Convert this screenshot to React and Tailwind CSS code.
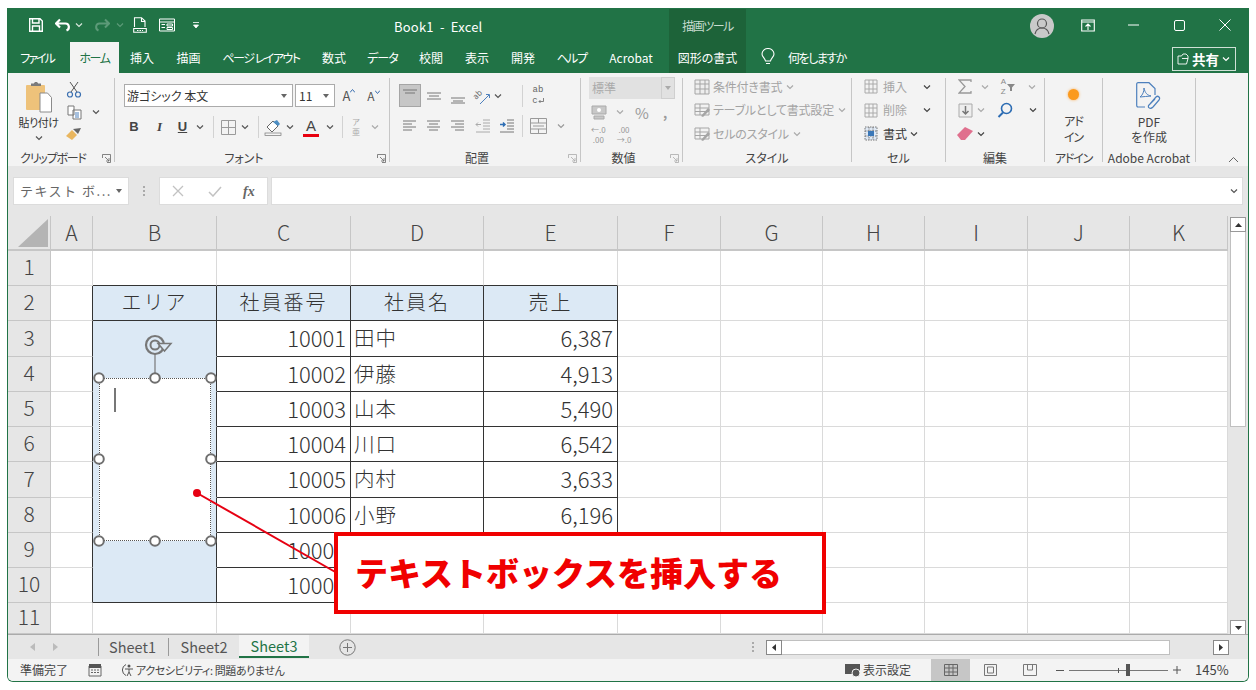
import React from "react";

const font = "[font-family:'Noto_Sans_CJK_JP','Noto_Sans',sans-serif]";

const Chev = ({ className = "", color = "#555" }) => (
  <svg width="8" height="6" viewBox="0 0 8 6" className={className}>
    <path d="M1 1.5 4 4.5 7 1.5" fill="none" stroke={color} strokeWidth="1.2" />
  </svg>
);

const Sep = () => <div className="h-[22px] w-px bg-[#d2d2d2]" />;

const Launcher = ({ color = "#666" }) => (
  <svg width="9" height="9" viewBox="0 0 9 9">
    <path d="M.5 4V.5H8.500V8.500H5M3 3 7 7M7 4V7H4" fill="none" stroke={color} strokeWidth=".8" />
  </svg>
);

const Lines = ({ kind = "left", color = "#777" }) => {
  const rows = {
    left: ["M1 3h13", "M1 6h9", "M1 9h13", "M1 12h9"],
    center: ["M1 3h13", "M3 6h9", "M1 9h13", "M3 12h9"],
    right: ["M1 3h13", "M5 6h9", "M1 9h13", "M5 12h9"],
    top: ["M1 2h14", "M3 5h10"],
    mid: ["M1 5h14", "M3 8h10", "M1 11h14"],
    bot: ["M1 10h14", "M3 13h10", "M1 15h14"],
  };
  return (
    <svg width="16" height="16" viewBox="0 0 16 16">
      {rows[kind].map((d) => (
        <path key={d} d={d} stroke={color} strokeWidth="1" />
      ))}
    </svg>
  );
};

const Group = ({ w, label, launcher, tight, children }) => (
  <div className={`${w} shrink-0 mt-[5px] h-[84px] border-r border-[#c6c6c6]`}>
    <div className="h-[70px] flow-root">{children}</div>
    <div className="h-[20px] grid grid-cols-[1fr_auto_1fr] items-center">
      <span />
      <span
        className={`text-[12px] leading-[16px] text-[#444] whitespace-nowrap [font-feature-settings:'palt'] ${launcher ? "mr-[16px]" : ""} ${tight ? "tracking-[-1.200px]" : ""}`}
      >
        {label}
      </span>
      <span className="justify-self-end mr-[3px] flex">{launcher && <Launcher color={launcher} />}</span>
    </div>
  </div>
);

const TitleBar = () => (
  <div className="h-[34px] flex bg-[#217346] text-white shrink-0">
    <div className="w-[386px] shrink-0 flex items-center pl-[21px]">
      <svg width="14" height="14" viewBox="0 0 14 14">
        <path d="M.7.7H11L13.300 3V13.300H.7Z" fill="none" stroke="#fff" strokeWidth="1.400" />
        <path d="M3.500 1V5H10V1M3.500 13V8H10.500V13" fill="none" stroke="#fff" strokeWidth="1.400" />
      </svg>
      <svg width="16" height="14" viewBox="0 0 16 14" className="ml-[12px]">
        <path d="M1 5.500H10.500C14.500 5.500 15 11 11.500 12.500M5 1.500 1 5.500 5 9.500" fill="none" stroke="#fff" strokeWidth="2.200" />
      </svg>
      <Chev className="ml-[4px]" color="#d7e6dc" />
      <svg width="16" height="14" viewBox="0 0 16 14" className="ml-[11px]">
        <path d="M15 5.500H5.500C1.500 5.500 1 11 4.500 12.500M11 1.500 15 5.500 11 9.500" fill="none" stroke="#5c9a78" strokeWidth="2" />
      </svg>
      <Chev className="ml-[6px]" color="#5c9a78" />
      <svg width="14" height="16" viewBox="0 0 14 16" className="ml-[9px]">
        <path d="M1.500 10V.7H8.500L12 4V10M8.500 1V4.500H12M.7 11.500H13.300V15.300H.7Z" fill="none" stroke="#fff" strokeWidth="1.100" />
        <path d="M4 13.500h6" stroke="#fff" strokeDasharray="1.500 1" />
      </svg>
      <svg width="16" height="14" viewBox="0 0 16 14" className="ml-[12px]">
        <path d="M.5 1H15.500V13H.5ZM.5 4H15.500M2.500 6.500H6M2.500 9.500H6M8 6H13.500V8H8ZM8 9.500H13.500V11.500H8Z" fill="none" stroke="#fff" />
      </svg>
      <svg width="6" height="7" viewBox="0 0 6 7" className="ml-[18px]">
        <path d="M0 .5H6M.5 3H5.500L3 6Z" stroke="#fff" fill="#fff" strokeWidth=".8" />
      </svg>
    </div>
    <div className="w-[275px] shrink-0 flex items-center pt-[3px] text-[13px] tracking-[.2px] whitespace-pre">Book1  -  Excel</div>
    <div className="w-[77px] shrink-0 mt-px bg-[#1d6339] flex items-center justify-center text-[12px] tracking-[-1.500px] text-[#c7dccf] [font-feature-settings:'palt']">描画ツール</div>
    <div className="ml-[284px] w-[24px] h-[24px] mt-[6px] rounded-full bg-[#c9c9c9] flex items-center justify-center overflow-hidden">
      <svg width="18" height="18" viewBox="0 0 18 18">
        <circle cx="9" cy="6.500" r="4.500" fill="none" stroke="#555" strokeWidth="1.200" />
        <path d="M2 17C3 12.500 6 11 9 11S15 12.500 16 17" fill="none" stroke="#555" strokeWidth="1.200" />
      </svg>
    </div>
    <div className="w-[46px] ml-[11px] flex items-center justify-center">
      <svg width="14" height="13" viewBox="0 0 14 13">
        <path d="M.7 1H13.300V12H.7ZM.7 3H13.300M7 11V5M4.500 7.500 7 5 9.500 7.500" fill="none" stroke="#fff" strokeWidth="1.100" />
      </svg>
    </div>
    <div className="w-[45px] flex items-center justify-center">
      <svg width="11" height="2" viewBox="0 0 11 2"><path d="M0 1h11" stroke="#fff" /></svg>
    </div>
    <div className="w-[46px] flex items-center justify-center">
      <svg width="11" height="11" viewBox="0 0 11 11"><rect x=".5" y=".5" width="10" height="10" rx="1.500" fill="none" stroke="#fff" /></svg>
    </div>
    <div className="w-[46px] flex items-center justify-center">
      <svg width="12" height="12" viewBox="0 0 12 12"><path d="M.5.5 11.500 11.500M11.500.5.5 11.500" stroke="#fff" /></svg>
    </div>
  </div>
);

const tabs = [
  ["挿入", "w-[46px]"],
  ["描画", "w-[47px]"],
  ["ページ レイアウト", "w-[98px] tracking-[-1.500px]"],
  ["数式", "w-[48px]"],
  ["データ", "w-[49px] tracking-[-1px]"],
  ["校閲", "w-[48px]"],
  ["表示", "w-[44px]"],
  ["開発", "w-[48px]"],
  ["ヘルプ", "w-[49px] tracking-[-1.500px]"],
  ["Acrobat", "w-[70px]"],
];

const TabBar = () => (
  <div className="h-[31px] flex bg-[#217346] text-white text-[12px] shrink-0 [font-feature-settings:'palt'] whitespace-nowrap">
    <div className="w-[62px] pr-[4px] flex items-center justify-center tracking-[-2px]">ファイル</div>
    <div className="w-[49px] bg-[#f3f3f3] text-[#217346] flex items-center justify-center tracking-[-1.500px]">ホーム</div>
    {tabs.map(([t, w]) => (
      <div key={t} className={`${w} flex items-center justify-center`}>{t}</div>
    ))}
    <div className="w-[3px]" />
    <div className="w-[77px] bg-[#1d6339] flex items-center justify-center">図形の書式</div>
    <svg width="14" height="18" viewBox="0 0 14 18" className="ml-[15px] mt-[6px]">
      <path d="M4.500 13C4 10 1 9 1 6A6 5.500 0 0 1 13 6C13 9 10 10 9.500 13ZM5 15.500H9" fill="none" stroke="#fff" strokeWidth="1.100" />
    </svg>
    <div className="ml-[13px] flex items-center tracking-[-1.500px]">何をしますか</div>
    <div className="ml-auto mr-[12px] mt-[5px] h-[24px] w-[64px] border border-[#cfe0d6] flex items-center pl-[4px] gap-[3px]">
      <svg width="12" height="12" viewBox="0 0 12 12">
        <path d="M4.500 3H1V11H9.500L11 5.500H5M4.500 3 6 1H9L11 3V5.500" fill="none" stroke="#fff" strokeWidth=".9" />
      </svg>
      <span className="text-[13.500px] font-bold">共有</span>
      <Chev color="#fff" />
    </div>
  </div>
);

const ClipboardGroup = () => (
  <Group w="w-[107px]" label="クリップボード" launcher="#666" tight>
    <div className="flex pt-[3px] pl-[9px]">
      <div className="w-[43px] flex flex-col items-center">
        <svg width="26" height="32" viewBox="0 0 26 32">
          <rect x="0" y="4" width="19" height="25" rx="1" fill="#eec27a" />
          <path d="M5 5V2.500H8C8 .5 12 .5 12 2.500H15V5Z" fill="#7b7b7b" />
          <path d="M14 12H21.500L25.500 16.500V31H14Z" fill="#fff" stroke="#8b8b8b" />
        </svg>
        <span className="mt-[2px] text-[11px] leading-[14px] text-[#333] whitespace-nowrap [font-feature-settings:'palt'] tracking-[-.5px]">貼り付け</span>
        <Chev className="mt-[6px]" />
      </div>
      <div className="w-[22px] ml-[3px] flex flex-col items-center gap-[7px]">
        <svg width="16" height="17" viewBox="0 0 16 17">
          <path d="M4 1 11 11M12 1 5 11" stroke="#555" />
          <circle cx="4" cy="13.500" r="2.500" fill="none" stroke="#3a6fb0" strokeWidth="1.200" />
          <circle cx="12" cy="13.500" r="2.500" fill="none" stroke="#3a6fb0" strokeWidth="1.200" />
        </svg>
        <svg width="15" height="15" viewBox="0 0 15 15">
          <path d="M1 1H7V10H1ZM6 5H14V14H6Z" fill="#fff" stroke="#777" />
          <path d="M8 8h4M8 10h4M8 12h4" stroke="#4d80bd" />
        </svg>
        <svg width="16" height="14" viewBox="0 0 16 14">
          <path d="M0 9 6 3 11 8 6 13Z" fill="#e9b65f" />
          <path d="M7 2 12 7 15 1Z" fill="#666" />
        </svg>
      </div>
      <Chev className="ml-[7px] mt-[28px]" />
    </div>
  </Group>
);

const FontGroup = () => (
  <Group w="w-[275px]" label="フォント" launcher="#666">
    <div className="pt-[6px] pl-[9px]">
      <div className="flex items-center h-[23px]">
        <div className="w-[169px] h-[23px] bg-white border border-[#ababab] flex items-center pl-[2px] text-[12px] text-[#333] [font-feature-settings:'palt']">
          游ゴシック 本文
          <svg width="6" height="4" viewBox="0 0 6 4" className="ml-auto mr-[5px]"><path d="M0 0H6L3 4Z" fill="#666" /></svg>
        </div>
        <div className="w-[40px] h-[23px] ml-[2px] bg-white border border-[#ababab] flex items-center pl-[3px] text-[12px] text-[#333]">
          11
          <svg width="6" height="4" viewBox="0 0 6 4" className="ml-auto mr-[5px]"><path d="M0 0H6L3 4Z" fill="#666" /></svg>
        </div>
        <div className="w-[26px] ml-[1px] flex justify-center text-[13px] text-[#555]">
          A
          <svg width="5" height="4" viewBox="0 0 5 4" className="mt-[3px]"><path d="M0 3.500 2.500.5 5 3.500" fill="none" stroke="#3a6fb0" /></svg>
        </div>
        <div className="w-[23px] flex justify-center text-[12px] text-[#555]">
          A
          <svg width="5" height="4" viewBox="0 0 5 4" className="mt-[3px]"><path d="M0 .5 2.500 3.500 5 .5" fill="none" stroke="#3a6fb0" /></svg>
        </div>
      </div>
      <div className="-ml-[3px] mt-[9px] h-[22px] grid grid-cols-[26px_25px_21px_14px_12px_18px_16px_10px_20px_14px_28px_10px_14px_14px_24px] items-center justify-items-center text-[#444]">
        <b className="text-[13px] font-['Liberation_Sans']">B</b>
        <i className="text-[13px] font-bold font-['Liberation_Serif']">I</i>
        <u className="text-[13px] font-bold font-['Liberation_Sans']">U</u>
        <Chev />
        <Sep />
        <svg width="15" height="15" viewBox="0 0 15 15"><path d="M.5.5H14.500V14.500H.5ZM7.500.5V14.500M.5 7.500H14.500" fill="none" stroke="#9a9a9a" /></svg>
        <Chev />
        <Sep />
        <svg width="18" height="17" viewBox="0 0 18 17">
          <path d="M3 8 9 2 14 7 8 13Z" fill="#fff" stroke="#666" />
          <path d="M9 3 13 1 16 5 14 7Z" fill="#4d8fc4" />
          <rect x="1" y="14" width="16" height="2.500" fill="#f4f4f4" stroke="#777" strokeWidth=".7" />
        </svg>
        <Chev />
        <div className="flex flex-col items-center">
          <span className="text-[15px] leading-[16px] text-[#444] font-['Liberation_Sans']">A</span>
          <span className="w-[16px] h-[3px] bg-[#e8000f]" />
        </div>
        <Chev />
        <Sep />
        <div className="flex flex-col items-center text-[8px] leading-[10px] text-[#aaa]">
          <span>ア</span>
          <span>亜</span>
        </div>
        <Chev color="#aaa" />
      </div>
    </div>
  </Group>
);

const AlignGroup = () => (
  <Group w="w-[191px]" label="配置" launcher="#aaa">
    <div className="pt-[6px] pl-[9px]">
      <div className="h-[23px] grid grid-cols-[22px_25px_24px_24px_8px_12px_16px_16px] items-center justify-items-center">
        <div className="w-[22px] h-[23px] bg-[#c6c6c6] border border-[#a5a5a5] flex items-center justify-center"><Lines kind="top" /></div>
        <Lines kind="mid" />
        <Lines kind="bot" />
        <svg width="22" height="20" viewBox="0 0 22 20">
          <path d="M9 18 18 9M15 8.500 18.500 8.500 18.500 12" fill="none" stroke="#4d80bd" />
          <text x="5" y="14" fontSize="8" fill="#666" transform="rotate(-45 5 14)">ab</text>
        </svg>
        <Chev />
        <span />
        <Sep />
        <div className="flex flex-col items-center font-['Liberation_Mono'] text-[9px] leading-[11px] text-[#666]">
          <span>ab</span>
          <div className="flex items-center">
            <span>c</span>
            <svg width="6" height="6" viewBox="0 0 6 6"><path d="M5.500 0V3.500H1M2.500 2 1 3.500 2.500 5" fill="none" stroke="#666" strokeWidth=".8" /></svg>
          </div>
        </div>
      </div>
      <div className="mt-[8px] h-[22px] grid grid-cols-[22px_25px_24px_25px_24px_6px_26px_20px] items-center justify-items-center">
        <Lines kind="left" />
        <Lines kind="center" />
        <Lines kind="right" />
        <svg width="16" height="14" viewBox="0 0 16 14"><path d="M8 1h7M8 4h7M8 7h7M8 10h7M1 13h14M6 5.500H1M3 3.500 1 5.500 3 7.500" fill="none" stroke="#aaa" /></svg>
        <svg width="16" height="14" viewBox="0 0 16 14"><path d="M8 1h7M8 4h7M8 7h7M8 10h7M1 13h14" fill="none" stroke="#777" /><path d="M1 5.500H6M4 3.500 6 5.500 4 7.500" fill="none" stroke="#2f6fb5" strokeWidth="1.500" /></svg>
        <Sep />
        <svg width="17" height="16" viewBox="0 0 17 16"><path d="M.5.5H16.500V15.500H.5ZM.5 5H16.500M.5 11H16.500M8.500 5V.5M8.500 11V15.500M3 8H14" fill="none" stroke="#999" /></svg>
        <Chev color="#999" />
      </div>
    </div>
  </Group>
);

const NumberGroup = () => (
  <Group w="w-[102px]" label="数値" launcher="#aaa">
    <div className="pl-[8px] -mt-px">
      <div className="w-[86px] h-[22px] bg-[#e1e1e1] flex items-center text-[12px] text-[#aaa] pl-[3px]">
        標準
        <div className="ml-auto w-[14px] h-full border border-[#cfcfcf] flex items-center justify-center">
          <svg width="6" height="4" viewBox="0 0 6 4"><path d="M0 0H6L3 4Z" fill="#aaa" /></svg>
        </div>
      </div>
      <div className="mt-[2px] h-[22px] grid grid-cols-[20px_22px_22px_24px] items-center justify-items-center text-[#9a9a9a]">
        <svg width="16" height="16" viewBox="0 0 16 16"><path d="M1 2H15V10H1ZM3 12H13V15H3Z" fill="#c8c8c8" stroke="#aaa" /><circle cx="8" cy="6" r="2" fill="#fff" /></svg>
        <Chev color="#aaa" />
        <span className="text-[15px] leading-none">%</span>
        <span className="text-[13px] font-bold leading-none">,</span>
      </div>
      <div className="mt-[2px] flex text-[8px] leading-[10px] text-[#999] pl-[2px] gap-[11px] text-center">
        <div className="flex flex-col"><span>←.0</span><span>.00</span></div>
        <div className="flex flex-col"><span>.00</span><span>→.0</span></div>
      </div>
    </div>
  </Group>
);

const StyleRow = ({ text, kind }) => (
  <div className="h-[23.500px] flex items-center text-[12px] text-[#a3a3a3] whitespace-nowrap [font-feature-settings:'palt'] tracking-[-.2px]">
    <svg width="16" height="16" viewBox="0 0 16 16" className="mr-[3px]">
      {kind === "grid" ? (
        <path d="M1 1H15V15H1ZM1 5H15M1 10H15M6 1V15M11 1V15" fill="#eee" stroke="#a5a5a5" />
      ) : (
        <>
          <path d="M1 2H15V13H1ZM1 6H15M1 9.500H15M6 2V13" fill="#f2f2f2" stroke="#a5a5a5" />
          <path d="M7 14 14 6 16 8 9 15Z" fill="#a5a5a5" />
        </>
      )}
    </svg>
    {text}
    <Chev className="ml-[4px]" color="#aaa" />
  </div>
);

const StyleGroup = () => (
  <Group w="w-[169px]" label="スタイル">
    <div className="pl-[11px] -mt-[3px]">
      <StyleRow text="条件付き書式" kind="grid" />
      <StyleRow text="テーブルとして書式設定" kind="table" />
      <StyleRow text="セルのスタイル" kind="table" />
    </div>
  </Group>
);

const CellRow = ({ text, on, sq, chevClass }) => (
  <div className={`h-[23.500px] flex items-center text-[12px] whitespace-nowrap ${on ? "text-[#333]" : "text-[#a6a6a6]"}`}>
    <svg width="15" height="15" viewBox="0 0 15 15" className="mr-[4px]">
      <path d="M1 1H13V14H1ZM1 5H13M1 10H13M5 1V14M9 1V14" fill={sq ? "#dfe9f5" : "none"} stroke={sq ? "#777" : "#aaa"} strokeDasharray={sq ? "1.500 1" : "none"} />
      {sq && <rect x="4" y="5" width="6" height="5" fill="#3b78b8" />}
    </svg>
    {text}
    <Chev className={chevClass} color="#444" />
  </div>
);

const CellGroup = () => (
  <Group w="w-[94px]" label="セル">
    <div className="pl-[12px] -mt-[3px]">
      <CellRow text="挿入" chevClass="ml-[16px]" />
      <CellRow text="削除" chevClass="ml-[16px]" />
      <CellRow text="書式" on sq chevClass="ml-[3px]" />
    </div>
  </Group>
);

const EditGroup = () => (
  <Group w="w-[99px]" label="編集">
    <div className="pl-[11px] -mt-[3px]">
      <div className="h-[23.500px] grid grid-cols-[16px_23px_24px_24px] items-center justify-items-center">
        <svg width="14" height="15" viewBox="0 0 14 15"><path d="M13 3V1H1L7 7.500 1 14H13V12" fill="none" stroke="#999" strokeWidth="1.300" /></svg>
        <Chev color="#aaa" />
        <div className="flex items-center gap-[1px]">
          <div className="flex flex-col font-['Liberation_Sans'] text-[8px] leading-[10px] text-[#888]"><span>A</span><span>Z</span></div>
          <svg width="8" height="8" viewBox="0 0 8 8"><path d="M0 1H8L5 4.500V8H3V4.500Z" fill="#888" /></svg>
        </div>
        <Chev color="#aaa" />
      </div>
      <div className="h-[23.500px] grid grid-cols-[16px_16px_32px_23px] items-center justify-items-center">
        <svg width="15" height="15" viewBox="0 0 15 15"><path d="M1 1H14V14H1Z" fill="#eee" stroke="#aaa" /><path d="M7.500 3V11M4.500 8 7.500 11 10.500 8" fill="none" stroke="#777" strokeWidth="1.500" /></svg>
        <Chev color="#aaa" />
        <svg width="16" height="16" viewBox="0 0 16 16"><circle cx="9.500" cy="6.500" r="5" fill="none" stroke="#2c6cb3" strokeWidth="1.600" /><path d="M6 10.500 1.500 15" stroke="#2c6cb3" strokeWidth="2" /></svg>
        <Chev color="#444" />
      </div>
      <div className="h-[23.500px] grid grid-cols-[16px_16px] items-center justify-items-center">
        <svg width="16" height="13" viewBox="0 0 16 13"><path d="M0 8 8 0 16 4 8 13 4 13Z" fill="#e0708e" /></svg>
        <Chev color="#444" />
      </div>
    </div>
  </Group>
);

const AddinGroup = () => (
  <Group w="w-[58px]" label="アドイン" tight>
    <div className="flex flex-col items-center pt-[11px] text-[12px] leading-[16px] text-[#444] [font-feature-settings:'palt'] tracking-[-1px]">
      <span className="w-[11px] h-[11px] rounded-full bg-[#fb9a1e] mb-[13px] shadow-[0_0_3px_#fbb05a]" />
      <span>アド</span>
      <span>イン</span>
    </div>
  </Group>
);

const AcrobatGroup = () => (
  <Group w="w-[93px]" label="Adobe Acrobat">
    <div className="flex flex-col items-center pt-[4px] text-[12px] leading-[15px] text-[#444]">
      <svg width="26" height="30" viewBox="0 0 26 30" className="mb-[2px]">
        <path d="M9 25H2C1 25 .7 24 .7 23V2C.7 1 1.500.7 2 .7H13L19 6.500V13" fill="none" stroke="#4d80bd" strokeWidth="1.200" />
        <path d="M4 15C7 13 8 9 8 6 9 11 11 13 15 14 11 14 8 15 4 15Z" fill="none" stroke="#4d80bd" />
        <path d="M14 22 20 15C22 13 25 16 23 18L17 25C14 28 11 25 13 23L19 17" fill="none" stroke="#4d80bd" strokeWidth="1.200" />
      </svg>
      <span>PDF</span>
      <span>を作成</span>
    </div>
  </Group>
);

const Ribbon = () => (
  <div className="h-[93px] flex bg-[#f3f3f3] shrink-0">
    <ClipboardGroup />
    <FontGroup />
    <AlignGroup />
    <NumberGroup />
    <StyleGroup />
    <CellGroup />
    <EditGroup />
    <AddinGroup />
    <AcrobatGroup />
    <div className="flex-1 flex items-end justify-center pb-[3px] pl-[22px]">
      <svg width="11" height="7" viewBox="0 0 11 7"><path d="M1 6 5.500 1.500 10 6" fill="none" stroke="#666" /></svg>
    </div>
  </div>
);

const FormulaBar = () => (
  <div className="h-[50px] bg-[#e6e6e6] flex pt-[11px] pl-[5px] shrink-0">
    <div className="w-[116px] h-[28px] bg-white border border-[#dcdcdc] flex items-center pl-[6px] text-[13px] text-[#666] tracking-[1.500px] whitespace-nowrap">
      テキスト ボ...
      <svg width="6" height="4" viewBox="0 0 6 4" className="ml-auto mr-[6px]"><path d="M0 0H6L3 4Z" fill="#666" /></svg>
    </div>
    <div className="w-[30px] h-[28px] flex flex-col items-center justify-center gap-[2px]">
      <span className="w-[2px] h-[2px] bg-[#aaa]" />
      <span className="w-[2px] h-[2px] bg-[#aaa]" />
      <span className="w-[2px] h-[2px] bg-[#aaa]" />
    </div>
    <div className="w-[109px] h-[28px] bg-white border border-[#dcdcdc] flex items-center">
      <svg width="12" height="12" viewBox="0 0 12 12" className="ml-[12px]"><path d="M1 1 11 11M11 1 1 11" stroke="#c2c2c2" strokeWidth="1.300" /></svg>
      <svg width="14" height="11" viewBox="0 0 14 11" className="ml-[24px]"><path d="M1 6 5 10 13 1" fill="none" stroke="#c2c2c2" strokeWidth="1.500" /></svg>
      <i className="ml-[21px] text-[14px] font-bold font-['Liberation_Serif'] text-[#666]">fx</i>
    </div>
    <div className="ml-[3px] w-[972px] h-[28px] bg-white border border-[#dcdcdc] flex items-center justify-end pr-[4px]">
      <Chev />
    </div>
  </div>
);

const cols = ["A", "B", "C", "D", "E", "F", "G", "H", "I", "J", "K"];
const data = [
  [10001, "田中", "6,387"],
  [10002, "伊藤", "4,913"],
  [10003, "山本", "5,490"],
  [10004, "川口", "6,542"],
  [10005, "内村", "3,633"],
  [10006, "小野", "6,196"],
  [10007, "", ""],
  [10008, "", ""],
];
const heads = ["エリア", "社員番号", "社員名", "売上"];

const Cell = ({ r, c }) => {
  const inTable = r >= 2 && r <= 10 && c >= 1 && c <= 4;
  // B3:B10 is one merged cell, so no inner lines there
  const merged = c === 1 && r >= 3 && r <= 9;
  const darkRight = inTable || (c === 0 && r >= 2 && r <= 10);
  const darkBottom = inTable || (r === 1 && c >= 1 && c <= 4);
  const bottom = merged ? "border-b-[#dce9f5]" : darkBottom ? "border-b-[#333]" : "border-b-[#dadada]";
  const base = `border-r border-b ${darkRight ? "border-r-[#333]" : "border-r-[#dadada]"} ${bottom} flex items-center whitespace-nowrap pb-[2px]`;
  if (!inTable) return <div className={base} />;
  if (r === 2)
    return <div className={`${base} bg-[#dce9f5] justify-center text-[20px] tracking-[2px] font-light`}>{heads[c - 1]}</div>;
  if (c === 1) return <div className={`${base} bg-[#dce9f5]`} />;
  const row = data[r - 3];
  if (c === 2) return <div className={`${base} justify-end pr-[4px] text-[22px] font-light`}>{row[0]}</div>;
  if (c === 3) return <div className={`${base} pl-[3px] text-[20.500px] tracking-[1px] font-light`}>{row[1]}</div>;
  return <div className={`${base} justify-end pr-[4px] text-[22px] font-light`}>{row[2]}</div>;
};

const handles = [
  [99, 378], [155, 378], [211, 378], [99, 459], [211, 459], [99, 541], [155, 541], [211, 541],
];

const Sheet = () => (
  <div className="relative w-[1220px] h-[418px] shrink-0 bg-white text-[#333] overflow-hidden">
    <div className="grid grid-cols-[43px_42px_124px_134px_133px_134px_103px_102px_102px_103px_102px_98px] grid-rows-[35px_35px_35px_36px_35px_35px_35px_36px_35px_35px_35px_31px] h-full">
      <div className="bg-[#e6e6e6] border-r border-b-2 border-[#c6c6c6] flex items-end justify-end pr-[2px] pb-[2px]">
        <svg width="30" height="28" viewBox="0 0 30 28"><path d="M30 0V28H0Z" fill="#b4b4b4" /></svg>
      </div>
      {cols.map((h) => (
        <div key={h} className="bg-[#e6e6e6] border-r border-b-2 border-[#c6c6c6] flex items-center justify-center text-[21px] text-[#444] font-light">{h}</div>
      ))}
      {Array.from({ length: 11 }, (_, i) => i + 1).map((r) => (
        <React.Fragment key={r}>
          <div className="bg-[#e6e6e6] border-r border-b border-[#c6c6c6] flex items-center justify-center pb-[2px] text-[21px] text-[#444] font-light">{r}</div>
          {cols.map((_, c) => (
            <Cell key={c} r={r} c={c} />
          ))}
        </React.Fragment>
      ))}
    </div>

    {/* selected text box */}
    <div className="absolute left-[91px] top-[162px] w-[112px] h-[163px] bg-white border border-dotted border-[#555]">
      <div className="ml-[14px] mt-[9px] w-[2px] h-[24px] bg-[#777]" />
    </div>

    <svg className="absolute inset-0" width="1220" height="418" viewBox="8 216 1220 418">
      <path d="M155 354V373" stroke="#777" strokeWidth="1.200" />
      <circle cx="155" cy="345" r="9" fill="none" stroke="#777" strokeWidth="2.200" />
      <circle cx="155" cy="345" r="4.500" fill="none" stroke="#777" strokeWidth="2" />
      <path d="M158 343.500H171L164.500 351Z" fill="#dce9f5" stroke="#777" strokeWidth="1.500" />
      {handles.map(([x, y]) => (
        <circle key={`${x}-${y}`} cx={x} cy={y} r="4.800" fill="#fff" stroke="#6e6e6e" strokeWidth="2" />
      ))}
      <path d="M197 493 337 573" stroke="#e60012" strokeWidth="2" />
      <circle cx="197" cy="493" r="4" fill="#e60012" />
    </svg>

    {/* callout */}
    <div className="absolute left-[326px] top-[316px] w-[492px] h-[82px] bg-white border-[4px] border-[#f00000] flex items-center pl-[17px] text-[33px] font-black text-[#f00000] whitespace-nowrap">
      テキストボックスを挿入する
    </div>
  </div>
);

const VScroll = () => (
  <div className="w-[20px] h-[418px] shrink-0 bg-[#e6e6e6] flex flex-col items-center pt-px">
    <div className="w-[16px] h-[15px] bg-white border border-[#999] flex items-center justify-center">
      <svg width="7" height="4" viewBox="0 0 7 4"><path d="M0 4H7L3.500 0Z" fill="#333" /></svg>
    </div>
    <div className="w-[16px] h-[195px] bg-white border-x border-b border-[#c0c0c0]" />
    <div className="mt-auto w-[16px] h-[15px] bg-white border border-[#999] flex items-center justify-center mb-[-1px]">
      <svg width="7" height="4" viewBox="0 0 7 4"><path d="M0 0H7L3.500 4Z" fill="#333" /></svg>
    </div>
  </div>
);

const SheetTabs = () => (
  <div className="h-[25px] bg-[#e6e6e6] border-t border-[#ababab] flex items-start text-[14.500px] text-[#555] shrink-0">
    <div className="w-[90px] h-full flex items-center pl-[22px] gap-[18px]">
      <svg width="5" height="8" viewBox="0 0 5 8"><path d="M5 0V8L0 4Z" fill="#bbb" /></svg>
      <svg width="5" height="8" viewBox="0 0 5 8"><path d="M0 0V8L5 4Z" fill="#bbb" /></svg>
    </div>
    <div className="mt-[3px] h-[18px] w-px bg-[#9a9a9a]" />
    <div className="w-[69px] h-full flex items-center justify-center pr-[2px]">Sheet1</div>
    <div className="mt-[3px] h-[18px] w-px bg-[#9a9a9a]" />
    <div className="w-[70px] h-full flex items-center justify-center">Sheet2</div>
    <div className="w-[70px] h-[23px] bg-[#f3f3f3] border-b-2 border-[#217346] text-[#217346] flex items-center justify-center">Sheet3</div>
    <svg width="17" height="17" viewBox="0 0 17 17" className="ml-[30px] mt-[4px]">
      <circle cx="8.500" cy="8.500" r="7.700" fill="none" stroke="#777" />
      <path d="M8.500 4V13M4 8.500H13" stroke="#777" />
    </svg>
    <div className="ml-[396px] h-full flex flex-col justify-center gap-[2px]">
      <span className="w-[2px] h-[2px] bg-[#aaa]" />
      <span className="w-[2px] h-[2px] bg-[#aaa]" />
      <span className="w-[2px] h-[2px] bg-[#aaa]" />
    </div>
    <div className="ml-[12px] mt-[5px] flex h-[15px]">
      <div className="w-[16px] h-[15px] bg-white border border-[#888] flex items-center justify-center">
        <svg width="4" height="7" viewBox="0 0 4 7"><path d="M4 0V7L0 3.500Z" fill="#333" /></svg>
      </div>
      <div className="w-[388px] h-[15px] bg-white border-y border-r border-[#c0c0c0]" />
      <div className="ml-[43px] w-[16px] h-[15px] bg-white border border-[#888] flex items-center justify-center">
        <svg width="4" height="7" viewBox="0 0 4 7"><path d="M0 0V7L4 3.500Z" fill="#333" /></svg>
      </div>
    </div>
  </div>
);

const StatusBar = () => (
  <div className="h-[22px] bg-[#f3f3f3] flex items-center text-[12px] text-[#444] shrink-0 whitespace-nowrap [font-feature-settings:'palt']">
    <span className="ml-[12px] w-[48px]">準備完了</span>
    <svg width="14" height="14" viewBox="0 0 14 14" className="ml-[20px]">
      <path d="M1 3H13V13H1Z" fill="none" stroke="#666" />
      <path d="M1 1H13V5H1Z" fill="#555" />
      <path d="M3 7h2M6 7h2M9 7h2M3 9.500h2M6 9.500h2M9 9.500h2" stroke="#666" />
    </svg>
    <svg width="16" height="15" viewBox="0 0 16 15" className="ml-[19px]">
      <path d="M5 1.500A6 6 0 0 0 5 12.500" fill="none" stroke="#555" />
      <circle cx="8" cy="3" r="1.500" fill="#555" />
      <path d="M4 6H12M8 6V9M6 13 8 9 10 13" fill="none" stroke="#555" />
    </svg>
    <span className="-ml-[1px] w-[146px] text-[11px] tracking-[-0.4px]">アクセシビリティ: 問題ありません</span>
    <svg width="17" height="15" viewBox="0 0 17 15" className="ml-[563px]">
      <rect x="0" y="1" width="15" height="10" fill="#555" />
      <circle cx="11" cy="10" r="4" fill="#555" stroke="#f3f3f3" />
    </svg>
    <span className="w-[50px] text-[12px] ml-px">表示設定</span>
    <div className="ml-[18px] w-[39px] h-[22px] bg-[#c6c6c6] flex items-center justify-center">
      <svg width="14" height="12" viewBox="0 0 14 12"><path d="M.5.5H13.500V11.500H.5ZM.5 4H13.500M.5 8H13.500M5 .5V11.500M9 .5V11.500" fill="none" stroke="#666" /></svg>
    </div>
    <div className="w-[40px] flex justify-center">
      <svg width="13" height="12" viewBox="0 0 13 12"><path d="M.5.5H12.500V11.500H.5ZM3.500 3H9.500V9H3.500Z" fill="none" stroke="#777" /></svg>
    </div>
    <div className="w-[40px] flex justify-center">
      <svg width="14" height="12" viewBox="0 0 14 12"><path d="M.5.5H13.500V11.500H.5ZM4.500.5V6H9.500V.5" fill="none" stroke="#777" /></svg>
    </div>
    <span className="w-[8px] h-px bg-[#555] ml-[6px]" />
    <div className="ml-[5px] w-[99px] h-[1px] bg-[#777] flex items-center">
      <span className="ml-[49px] w-px h-[5px] bg-[#555]" />
      <span className="ml-[7px] w-[4px] h-[12px] bg-[#555]" />
    </div>
    <svg width="8" height="8" viewBox="0 0 8 8" className="ml-[5px]"><path d="M4 0V8M0 4H8" stroke="#555" /></svg>
    <span className="ml-[14px] text-[13px]">145%</span>
  </div>
);

export default function App() {
  return (
    <div className={`w-[1256px] h-[690px] bg-white pt-[8px] pb-[8px] px-[7px] overflow-hidden ${font}`}>
      <div className="h-[674px] flex flex-col border-x border-b border-[#217346] rounded-b-[6px] overflow-hidden">
        <TitleBar />
        <TabBar />
        <Ribbon />
        <FormulaBar />
        <div className="flex shrink-0">
          <Sheet />
          <VScroll />
        </div>
        <SheetTabs />
        <StatusBar />
      </div>
    </div>
  );
}
